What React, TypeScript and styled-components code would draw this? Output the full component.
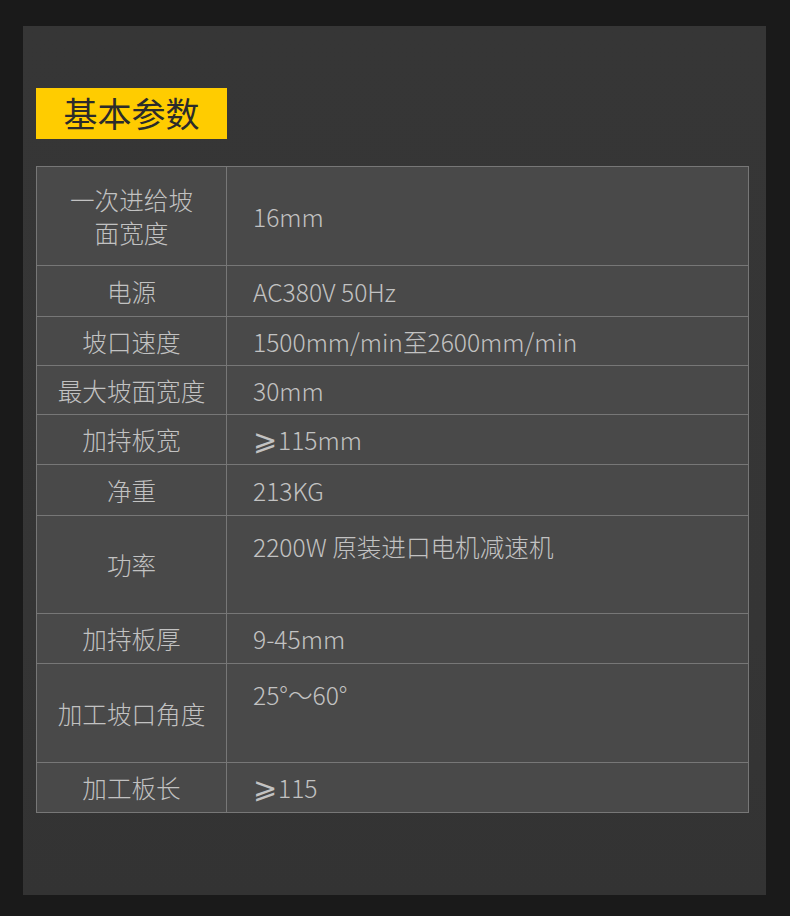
import React from "react";
import styled, { createGlobalStyle } from "styled-components";

const Global = createGlobalStyle`
  html, body { margin: 0; padding: 0; background: #1a1a1a; }
  body { font-family: "Noto Sans CJK SC", "Noto Sans", sans-serif; }
`;

const Page = styled.div`
  width: 790px;
  height: 916px;
  padding: 26px 24px 21px 23px;
  box-sizing: border-box;
`;

const Panel = styled.section`
  height: 100%;
  box-sizing: border-box;
  background: linear-gradient(180deg, #363636 0%, #353535 70%, #333333 100%);
  padding: 62px 17px 0 13px;
`;

const Title = styled.h2`
  margin: 0;
  width: 191px;
  height: 51px;
  background: #ffcc00;
  color: #2b2b2b;
  font-size: 34px;
  font-weight: 400;
  line-height: 50px;
  text-align: center;
`;

const Table = styled.table`
  margin-top: 27px;
  width: 713px;
  border-collapse: collapse;
  background: #494949;
  table-layout: fixed;
  font-weight: 300;
  font-size: 24.6px;
  color: #c2c2c2;
`;

const Row = styled.tr<{ $h: number }>`
  height: ${(p) => p.$h}px;
`;

const Label = styled.td`
  width: 190px;
  border: 1px solid #777;
  text-align: center;
  vertical-align: middle;
  line-height: 33px;
  padding: 0 4px;
  box-sizing: border-box;
`;

const Value = styled.td<{ $top?: boolean }>`
  border: 1px solid #777;
  vertical-align: ${(p) => (p.$top ? "top" : "middle")};
  padding: ${(p) => (p.$top ? "14px 10px 0 26px" : "0 10px 0 26px")};
  line-height: 33px;
`;

const Sym = styled.span`
  font-family: "DejaVu Sans", sans-serif;
  font-weight: 200;
  font-size: 29px;
  line-height: 0;
  margin-right: 1px;
`;

const Geq = () => <Sym>⩾</Sym>;

const rows: { label: React.ReactNode; value: React.ReactNode; h: number; top?: boolean }[] = [
  { label: <>一次进给坡<br />面宽度</>, value: "16mm", h: 99 },
  { label: "电源", value: "AC380V 50Hz", h: 51 },
  { label: "坡口速度", value: "1500mm/min至2600mm/min", h: 49 },
  { label: "最大坡面宽度", value: "30mm", h: 49 },
  { label: "加持板宽", value: <><Geq />115mm</>, h: 50 },
  { label: "净重", value: "213KG", h: 51 },
  { label: "功率", value: "2200W 原装进口电机减速机", h: 98, top: true },
  { label: "加持板厚", value: "9-45mm", h: 50 },
  { label: "加工坡口角度", value: "25°～60°", h: 99, top: true },
  { label: "加工板长", value: <><Geq />115</>, h: 50 },
];

export default function App() {
  return (
    <>
      <Global />
      <Page>
        <Panel>
          <Title>基本参数</Title>
          <Table>
            <tbody>
              {rows.map((r, i) => (
                <Row key={i} $h={r.h}>
                  <Label>{r.label}</Label>
                  <Value $top={r.top}>{r.value}</Value>
                </Row>
              ))}
            </tbody>
          </Table>
        </Panel>
      </Page>
    </>
  );
}
